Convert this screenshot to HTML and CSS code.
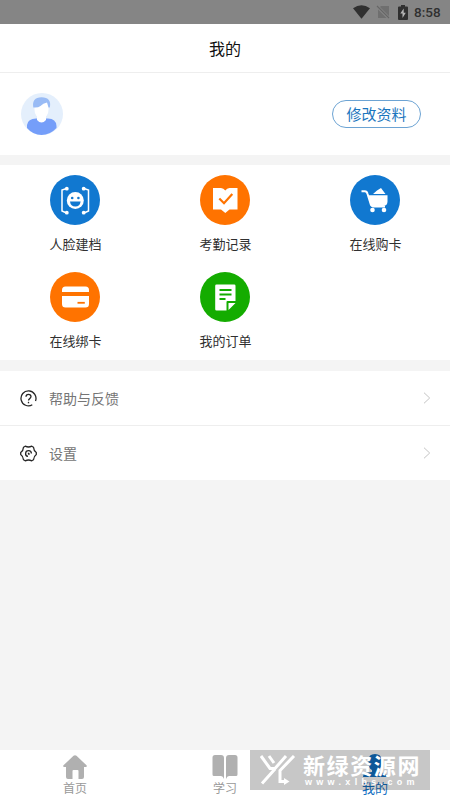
FILE: index.html
```html
<!DOCTYPE html>
<html lang="zh-CN">
<head>
<meta charset="utf-8">
<title>我的</title>
<link rel="stylesheet" href="styles.css">
</head>
<body>
<div class="app">
  <div class="status">
    <svg width="17" height="14" viewBox="0 0 17 14"><path d="M0 3.2Q8.5-2.9 17 3.2L8.5 13.8Z" fill="#303030"/></svg>
    <svg class="sim" width="14" height="14" viewBox="0 0 14 14"><path d="M5 1h8v10L4 2ZM2 4.500l8.500 8.500H2Z" fill="#6f6f6f"/><path d="m1 1 12 12" stroke="#666" stroke-width="1.100"/></svg>
    <svg class="battery" width="10" height="15" viewBox="0 0 10 15"><path d="M3 0h4v1.500h2q1 0 1 1V14q0 1-1 1H1q-1 0-1-1V2.500q0-1 1-1h2Z" fill="#303030"/><path d="M5.700 3.500 2.300 8.500h2.200V13l3.300-5.300H5.700Z" fill="#b5b5b5"/></svg>
    <span class="time">8:58</span>
  </div>
  <header class="header">我的</header>
  <section class="profile">
    <svg width="42" height="42" viewBox="0 0 42 42">
      <circle cx="21" cy="21" r="21" fill="#e4effc"/>
      <path d="M6 35V32Q7 25.500 15 25.500h12Q35 25.500 35.500 33v2Q29 42 20.500 42 12 42 6 35Z" fill="#759ef9"/>
      <path d="M16 20h9v7q-4.500 5-9 0Z" fill="#fff"/>
      <path d="M13.500 12q0-6 7-6t7 6v4.500q0 8-7 8t-7-8Z" fill="#fff"/>
      <path d="M12.300 14.500Q10.500 4.500 20.500 4.200 31 4.500 28.800 14.500H27.500L26 9.500Q22 10 19.500 13q-2.500 2-7.200 1.500Z" fill="#99bbf5"/>
    </svg>
    <button class="edit">修改资料</button>
  </section>
  <section class="grid">
    <div class="item">
      <svg class="disc" viewBox="0 0 50 50"><circle cx="25" cy="25" r="25" fill="#1178d0"/>
        <g fill="none" stroke="#fff" stroke-width="1.500"><path d="M16.500 13.500 12 15v21l4.500 2M34 13.500l4.500 1.500v21L34 38"/></g>
        <g fill="#fff"><circle cx="16.800" cy="13.700" r="1.900"/><circle cx="16.800" cy="37.700" r="1.900"/><circle cx="33.700" cy="13.700" r="1.900"/><circle cx="33.700" cy="37.700" r="1.900"/><circle cx="25.300" cy="25.500" r="8.500"/></g>
        <g fill="#1178d0"><circle cx="22.200" cy="23" r="1.300"/><circle cx="28.400" cy="23" r="1.300"/><path d="M20 26.500h10.600q-.6 5-5.300 5t-5.300-5Z"/></g></svg>
      <span>人脸建档</span>
    </div>
    <div class="item">
      <svg class="disc" viewBox="0 0 50 50"><circle cx="25" cy="25" r="25" fill="#ff7300"/>
        <path d="M13 13h8q2.500 0 4.300 2.500Q27 13 29.500 13h8v21.500h-8L25.300 38 21 34.500h-8Z" fill="#fff"/><path d="m19.300 23.500 4.700 4.700 8.300-9.200" fill="none" stroke="#ff7300" stroke-width="2.200"/></svg>
      <span>考勤记录</span>
    </div>
    <div class="item">
      <svg class="disc" viewBox="0 0 50 50"><circle cx="25" cy="25" r="25" fill="#1178d0"/>
        <path d="M11.500 16.300h3.300q2 0 2.700 2.500l3 9.700q.8 3 3 3H35" fill="none" stroke="#fff" stroke-width="2"/>
        <path d="M18.500 20.300h19v6.200q0 4-4 4.500H23q-2 0-2.500-2ZM23 19l4-3.500 4-2.500 4.500 6Z" fill="#fff"/><g fill="#fff"><circle cx="22.500" cy="35" r="2.300"/><circle cx="34" cy="35" r="2.300"/></g></svg>
      <span>在线购卡</span>
    </div>
    <div class="item">
      <svg class="disc" viewBox="0 0 50 50"><circle cx="25" cy="25" r="25" fill="#ff7300"/>
        <path d="M12 20v-2q0-3.500 3.500-3.500h20q3.500 0 3.500 3.500v2ZM12 24h27v8q0 3.500-3.500 3.500h-20Q12 35.500 12 32Z" fill="#fff"/><path d="M27.500 30.800h7.300" stroke="#ff7300" stroke-width="1.800"/></svg>
      <span>在线绑卡</span>
    </div>
    <div class="item">
      <svg class="disc" viewBox="0 0 50 50"><circle cx="25" cy="25" r="25" fill="#14ac00"/>
        <path d="M16.500 12.500h17.700q1.300 0 1.300 1.300V29h-8q-1 0-1 1v8.500h-10q-1.300 0-1.300-1.300V13.800q0-1.300 1.300-1.300ZM28.500 31h7l-7 7Z" fill="#fff"/><path d="M19.500 18h12M19.500 22.500h12M19.500 27h6" stroke="#14ac00" stroke-width="1.800"/></svg>
      <span>我的订单</span>
    </div>
  </section>
  <section class="list">
    <div class="row">
      <svg width="17" height="17" viewBox="0 0 17 17" fill="none" stroke="#262626" stroke-width="1.300"><path d="M12.300 14.800A7.500 7.500 0 1 1 15.500 11"/><path d="M6 6.800Q6 4.300 8.500 4.300T11 6.600q0 1.100-1.300 2-1.200.8-1.200 2"/><path d="M8.500 11.800v1.500"/></svg>
      <span>帮助与反馈</span>
      <svg class="arrow" width="8" height="12" viewBox="0 0 8 12"><path d="m1 .7 5.700 5.300L1 11.300" fill="none" stroke="#c4c4c4"/></svg>
    </div>
    <div class="row">
      <svg width="17" height="17" viewBox="0 0 17 17" fill="none" stroke="#262626" stroke-width="1.300" stroke-linejoin="round"><path d="M5.200 1.200Q8.500 2.800 11.800 1.200L13.500 2.200Q13.700 5.700 16.300 7.500v2Q13.700 11.300 13.500 14.800L11.800 15.800Q8.500 14.200 5.200 15.800L3.500 14.800Q3.300 11.300.7 9.500v-2Q3.300 5.700 3.500 2.200Z"/><path d="M8 11.400A2.900 2.900 0 1 1 11.400 8.500M8.500 7.800v1.200h1.200"/></svg>
      <span>设置</span>
      <svg class="arrow" width="8" height="12" viewBox="0 0 8 12"><path d="m1 .7 5.700 5.300L1 11.300" fill="none" stroke="#c4c4c4"/></svg>
    </div>
  </section>
  <nav class="tabs">
    <div class="tab">
      <svg width="24" height="24" viewBox="0 0 24 24"><path d="M10.500.8q1.500-1.300 3 0l10 9.500q1 1.700-.8 1.700H21v10q0 2-2 2h-3.500v-8q0-1-1-1h-4q-1 0-1 1v8H5q-2 0-2-2V12H1.300Q-.5 12 .5 10.300Z" fill="#b0b0b0"/></svg>
      <span>首页</span>
    </div>
    <div class="tab">
      <svg width="26" height="24" viewBox="0 0 26 24"><path d="M3 0h6q3 0 3 3v21q-1-3-3-3H2q-1.500 0-1.500-1.500v-17Q.5 0 3 0ZM17 0h6q2.500 0 2.500 2.500v17Q25.500 21 24 21h-7q-2 0-3 3V3q0-3 3-3Z" fill="#b0b0b0"/></svg>
      <span>学习</span>
    </div>
    <div class="tab active">
      <svg width="24" height="24" viewBox="0 0 24 24"><path d="M5.500 5q0-6 6.500-6t6.500 6v4q0 4-3.500 6v2l7 1q2 1 2 4H0q0-3 2-4l7-1v-2q-3.500-2-3.500-6Z" fill="#1370c2"/></svg>
      <span>我的</span>
    </div>
  </nav>
  <div class="watermark">
    <svg width="36" height="31" viewBox="0 0 36 31" fill="none" stroke="#fff" stroke-width="3"><path d="M1 1 10 13.500H15L26 1M9 1l5 7M34 1 20 15.500V26.500h5M15 14 2 28.500"/><path d="m24 23 5.500 3.500L24 30Z" fill="#fff" stroke="none"/></svg>
    <div class="mark-text"><b>新绿资源网</b><span>www.xlhs.com</span></div>
  </div>
</div>
</body>
</html>
```
FILE: styles.css
```css
* { box-sizing: border-box; }
body {
  margin: 0;
  font-family: "Noto Sans CJK SC", sans-serif;
}
.app {
  position: relative;
  width: 450px;
  height: 800px;
  display: flex;
  flex-direction: column;
  background: #f4f4f4;
  overflow: hidden;
}
.status {
  height: 24px;
  flex: none;
  display: flex;
  align-items: center;
  justify-content: flex-end;
  padding-right: 8px;
  background: #858585;
}
.sim { margin-left: 6px; }
.battery { margin-left: 8px; }
.time {
  width: 28px;
  margin-left: 6px;
  font: 500 13.5px/24px Roboto, sans-serif;
  color: #303030;
  white-space: nowrap;
}
.header {
  height: 49px;
  flex: none;
  background: #fff;
  border-bottom: 1px solid #eee;
  text-align: center;
  font-size: 16px;
  line-height: 48px;
  color: #111;
}
.profile {
  height: 82px;
  flex: none;
  display: flex;
  align-items: center;
  justify-content: space-between;
  padding: 0 29px 0 21px;
  background: #fff;
}
.edit {
  width: 89px;
  height: 28px;
  padding: 0;
  border: 1px solid #6ca3d3;
  border-radius: 14px;
  background: #fff;
  font: 15px/26px "Noto Sans CJK SC", sans-serif;
  color: #1b76be;
}
.grid {
  height: 195px;
  flex: none;
  margin-top: 10px;
  padding: 10px 0 0 0.4px;
  display: grid;
  grid-template-columns: repeat(3, 150px);
  grid-template-rows: 97.4px 87.6px;
  background: #fff;
}
.item {
  display: flex;
  flex-direction: column;
  align-items: center;
  font-size: 13px;
  line-height: 20px;
  color: #303030;
}
.disc {
  width: 50px;
  height: 50px;
  margin-bottom: 8.5px;
  flex: none;
}
.list {
  margin-top: 11px;
  background: #fff;
}
.row {
  height: 54px;
  display: flex;
  align-items: center;
  gap: 12px;
  padding: 0 19px 0 20px;
  font-size: 14px;
  color: #757575;
}
.row span {
  margin-top: -1px;
}
.row:first-child {
  height: 55px;
  border-bottom: 1px solid #eee;
}
.arrow { margin-left: auto; }
.tabs {
  height: 50px;
  margin-top: auto;
  display: grid;
  grid-template-columns: repeat(3, 1fr);
  background: #fff;
}
.tab {
  display: flex;
  flex-direction: column;
  align-items: center;
  padding-top: 5px;
  font-size: 12px;
  line-height: 18px;
  color: #999;
}
.active {
  font-size: 13px;
  color: #1370c2;
}
.active svg { overflow: visible; }
.watermark {
  position: absolute;
  left: 250px;
  top: 750px;
  width: 180px;
  height: 40px;
  display: flex;
  padding: 5px 0 0 10px;
  background: rgba(0, 0, 0, 0.22);
  color: #fff;
}
.mark-text {
  display: flex;
  flex-direction: column;
  margin-left: 7px;
  white-space: nowrap;
}
.mark-text b {
  font-size: 22px;
  line-height: 23px;
  letter-spacing: 1.6px;
  margin-top: -2px;
}
.mark-text span {
  margin: 1px 0 0 2px;
  font: bold 9px/10px "Liberation Sans", sans-serif;
  letter-spacing: 4.3px;
}
```
